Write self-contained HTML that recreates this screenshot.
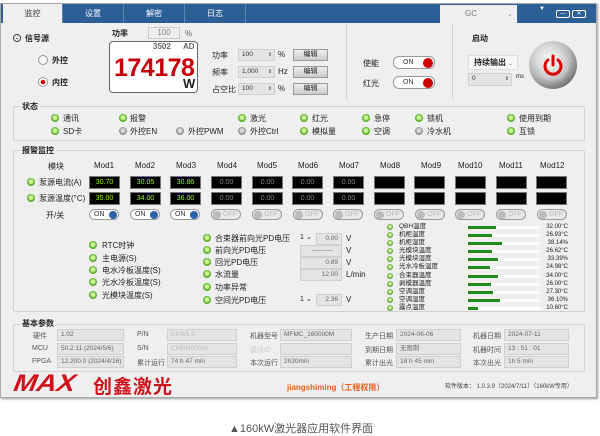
<!DOCTYPE html>
<html><head><meta charset="utf-8"><style>
*{margin:0;padding:0;box-sizing:border-box}
body{width:600px;height:436px;background:#fff;position:relative;overflow:hidden;font-family:"Liberation Sans","Noto Sans CJK SC",sans-serif;font-size:8px;color:#222}
.a{position:absolute;white-space:nowrap}
.win{position:absolute;left:0;top:3px;width:597px;height:395px;background:#efefef;border:1px solid #aaa;box-shadow:1px 1px 2px #999}
.tab{position:absolute;top:4px;height:19px;background:#2c5f95;color:#fff;font-size:8px;text-align:center;line-height:19px;border-right:1px solid #5a86b5}
.grp{position:absolute;border:1px solid #d2d2d2;border-radius:2px}
.gt{position:absolute;font-weight:bold;font-size:8px;background:#efefef;padding:0 2px}
.led{position:absolute;width:8px;height:8px;border-radius:50%;background:radial-gradient(circle at 50% 45%,#d6f7a0 0 25%,#5cb82c 55%,#3d8a1a 100%)}
.led.g{background:radial-gradient(circle at 50% 45%,#ddd 0 25%,#999 55%,#777 100%)}
.box{position:absolute;background:#000;border:1px solid #777;color:#9f0;font-size:7px;text-align:center;width:31px;height:13px;line-height:11px}
.box.d{color:#888}
.tg{position:absolute;width:30px;height:11px;border:1px solid #999;border-radius:6px;background:#fff;font-size:7px;line-height:9px;padding-left:4px;color:#333}
.tg i{position:absolute;right:1px;top:1px;width:8px;height:8px;border-radius:50%;background:#2a64a8}
.tg.off{background:#e8e8e8;color:#bbb;padding-left:11px}
.tg.off i{left:1px;right:auto;background:#bbb}
.inp{position:absolute;background:#e4e4e4;border:1px solid #cfcfcf;height:12px;font-size:6.5px;line-height:10px;padding-left:3px;color:#666;white-space:nowrap;overflow:hidden}
.btn{position:absolute;width:35px;height:12px;background:linear-gradient(#eee,#ccc);border:1px solid #999;font-size:7px;text-align:center;line-height:10px}
.bar{position:absolute;left:468px;width:72px;height:3px;background:#fff}
.bar i{display:block;height:3px;background:#1e8a1e}
.bl{position:absolute;color:#555;font-size:7px;white-space:nowrap}
.sl{position:absolute;left:387px;width:6px;height:6px;border-radius:50%;background:radial-gradient(circle at 50% 45%,#d6f7a0 0 25%,#5cb82c 55%,#3d8a1a 100%)}
</style></head><body>
<div class="win"></div>
<div class="a" style="left:1px;top:4px;width:595px;height:19px;background:#2c5f95"></div>
<div class="tab" style="left:3px;width:60px;background:#f0f0f0;color:#333">监控</div>
<div class="tab" style="left:63px;width:61px">设置</div>
<div class="tab" style="left:124px;width:61px">解密</div>
<div class="tab" style="left:185px;width:61px">日志</div>
<div class="a" style="left:440px;top:5px;width:77px;height:18px;background:#efefef;color:#777;line-height:18px;padding-left:25px">GC <span style="margin-left:28px;font-size:6px">⌄</span></div>
<div class="a" style="left:539px;top:6px;color:#fff;font-size:6px">▼</div>
<div class="a" style="left:556px;top:10px;width:14px;height:8px;border:1px solid #fff;border-radius:2px;color:#fff;font-size:6px;line-height:6px;text-align:center">—</div>
<div class="a" style="left:572px;top:10px;width:14px;height:8px;border:1px solid #fff;border-radius:2px;color:#fff;font-size:6px;line-height:6px;text-align:center">✕</div>

<div class="a" style="left:13px;top:34px;width:8px;height:8px;border:1px solid #444;border-radius:50%;font-size:5px;line-height:6px;text-align:center">⌄</div>
<div class="a" style="left:25px;top:33px;font-weight:bold">信号源</div>
<div class="a" style="left:38px;top:55px;width:10px;height:10px;border-radius:50%;border:1px solid #999;background:#f6f6f6"></div>
<div class="a" style="left:52px;top:55px;font-weight:bold">外控</div>
<div class="a" style="left:38px;top:77px;width:10px;height:10px;border-radius:50%;border:1px solid #999;background:radial-gradient(#c00 0 35%,#fff 45%)"></div>
<div class="a" style="left:52px;top:77px;font-weight:bold">内控</div>
<div class="a" style="left:112px;top:28px;font-weight:bold">功率</div>
<div class="a" style="left:148px;top:27px;width:32px;height:12px;border:1px solid #ccc;background:#eee;color:#888;text-align:center;line-height:10px">100</div>
<div class="a" style="left:185px;top:29px;color:#666">%</div>
<div class="a" style="left:109px;top:41px;width:89px;height:52px;background:#fff;border:1px solid #666;border-radius:4px"></div>
<div class="a" style="left:153px;top:42px;font-weight:bold;color:#666">3502</div>
<div class="a" style="left:183px;top:42px;font-weight:bold;color:#666">AD</div>
<div class="a" style="left:114px;top:54px;font-size:25px;font-weight:bold;color:#c8000a;letter-spacing:-0.5px">174178</div>
<div class="a" style="left:183px;top:76px;font-size:13px;font-weight:bold">W</div>

<div class="a" style="left:212px;top:50px">功率</div>
<div class="inp" style="left:238px;top:49px;width:37px;color:#333">100<span style="position:absolute;right:2px;font-size:5px">⇕</span></div>
<div class="a" style="left:278px;top:50px">%</div>
<div class="btn" style="left:293px;top:49px">编辑</div>
<div class="a" style="left:212px;top:67px">频率</div>
<div class="inp" style="left:238px;top:66px;width:37px;color:#333">1,000<span style="position:absolute;right:2px;font-size:5px">⇕</span></div>
<div class="a" style="left:278px;top:67px">Hz</div>
<div class="btn" style="left:293px;top:66px">编辑</div>
<div class="a" style="left:212px;top:84px">占空比</div>
<div class="inp" style="left:238px;top:83px;width:37px;color:#333">100<span style="position:absolute;right:2px;font-size:5px">⇕</span></div>
<div class="a" style="left:278px;top:84px">%</div>
<div class="btn" style="left:293px;top:83px">编辑</div>
<div class="a" style="left:346px;top:24px;width:1px;height:76px;background:#d4d4d4"></div>
<div class="a" style="left:452px;top:24px;width:1px;height:76px;background:#d4d4d4"></div>
<div class="a" style="left:363px;top:58px">使能</div>
<div class="tg" style="left:393px;top:56px;width:42px;height:13px;padding-left:9px;line-height:11px">ON<i style="background:#c00;width:10px;height:10px"></i></div>
<div class="a" style="left:363px;top:78px">红光</div>
<div class="tg" style="left:393px;top:76px;width:42px;height:13px;padding-left:9px;line-height:11px">ON<i style="background:#c00;width:10px;height:10px"></i></div>
<div class="a" style="left:472px;top:33px;font-weight:bold">启动</div>
<div class="a" style="left:468px;top:55px;width:50px;height:15px;background:#f8f8f8;border:1px solid #ddd;padding-left:5px;line-height:13px;font-weight:bold">持续输出 <span style="font-size:5px;color:#888">⌄</span></div>
<div class="inp" style="left:468px;top:73px;width:44px;height:13px;color:#333">0<span style="position:absolute;right:2px;font-size:5px">⇕</span></div>
<div class="a" style="left:516px;top:74px;font-size:6px">ms</div>
<div class="a" style="left:529px;top:41px;width:48px;height:48px;border-radius:50%;background:radial-gradient(circle at 40% 35%,#fff,#bbb 50%,#666 80%,#333)"></div>
<div class="a" style="left:537px;top:49px;width:32px;height:32px;border-radius:50%;background:radial-gradient(circle at 40% 35%,#fff,#ccc 60%,#999)"></div>
<svg class="a" style="left:541px;top:53px" width="24" height="24" viewBox="0 0 24 24"><path d="M7 7 A8 8 0 1 0 17 7" fill="none" stroke="#d00" stroke-width="3" stroke-linecap="round"/><path d="M12 3V12" stroke="#d00" stroke-width="3" stroke-linecap="round"/></svg>

<div class="grp" style="left:13px;top:106px;width:572px;height:35px"></div>
<div class="gt" style="left:20px;top:101px">状态</div>
<div class="led" style="left:51px;top:114px"></div><div class="a" style="left:63px;top:113px">通讯</div>
<div class="led" style="left:51px;top:127px"></div><div class="a" style="left:63px;top:126px">SD卡</div>
<div class="led" style="left:119px;top:114px"></div><div class="a" style="left:130px;top:113px">报警</div>
<div class="led g" style="left:119px;top:127px"></div><div class="a" style="left:130px;top:126px">外控EN</div>
<div class="led g" style="left:176px;top:127px"></div><div class="a" style="left:188px;top:126px">外控PWM</div>
<div class="led" style="left:238px;top:114px"></div><div class="a" style="left:250px;top:113px">激光</div>
<div class="led g" style="left:238px;top:127px"></div><div class="a" style="left:250px;top:126px">外控Ctrl</div>
<div class="led" style="left:300px;top:114px"></div><div class="a" style="left:312px;top:113px">红光</div>
<div class="led" style="left:300px;top:127px"></div><div class="a" style="left:312px;top:126px">模拟量</div>
<div class="led" style="left:362px;top:114px"></div><div class="a" style="left:374px;top:113px">急停</div>
<div class="led" style="left:362px;top:127px"></div><div class="a" style="left:374px;top:126px">空调</div>
<div class="led" style="left:415px;top:114px"></div><div class="a" style="left:427px;top:113px">锁机</div>
<div class="led g" style="left:415px;top:127px"></div><div class="a" style="left:427px;top:126px">冷水机</div>
<div class="led" style="left:507px;top:114px"></div><div class="a" style="left:519px;top:113px">使用到期</div>
<div class="led" style="left:507px;top:127px"></div><div class="a" style="left:519px;top:126px">互锁</div>

<div class="grp" style="left:13px;top:150px;width:572px;height:162px"></div>
<div class="gt" style="left:20px;top:145px">报警监控</div>
<div class="a" style="left:48px;top:161px">模块</div>
<div class="led" style="left:27px;top:178px"></div><div class="a" style="left:39px;top:177px">泵源电流(A)</div>
<div class="led" style="left:27px;top:194px"></div><div class="a" style="left:39px;top:193px">泵源温度(°C)</div>
<div class="a" style="left:46px;top:210px">开/关</div>

<div class="a" style="left:94px;top:161px">Mod1</div><div class="box" style="left:89px;top:176px">30.70</div><div class="box" style="left:89px;top:192px">35.00</div><div class="tg" style="left:89px;top:209px">ON<i></i></div>
<div class="a" style="left:135px;top:161px">Mod2</div><div class="box" style="left:130px;top:176px">30.05</div><div class="box" style="left:130px;top:192px">34.00</div><div class="tg" style="left:130px;top:209px">ON<i></i></div>
<div class="a" style="left:176px;top:161px">Mod3</div><div class="box" style="left:170px;top:176px">30.86</div><div class="box" style="left:170px;top:192px">36.00</div><div class="tg" style="left:170px;top:209px">ON<i></i></div>
<div class="a" style="left:217px;top:161px">Mod4</div><div class="box d" style="left:211px;top:176px">0.00</div><div class="box d" style="left:211px;top:192px">0.00</div><div class="tg off" style="left:211px;top:209px">OFF<i></i></div>
<div class="a" style="left:257px;top:161px">Mod5</div><div class="box d" style="left:252px;top:176px">0.00</div><div class="box d" style="left:252px;top:192px">0.00</div><div class="tg off" style="left:252px;top:209px">OFF<i></i></div>
<div class="a" style="left:298px;top:161px">Mod6</div><div class="box d" style="left:292px;top:176px">0.00</div><div class="box d" style="left:292px;top:192px">0.00</div><div class="tg off" style="left:293px;top:209px">OFF<i></i></div>
<div class="a" style="left:339px;top:161px">Mod7</div><div class="box d" style="left:333px;top:176px">0.00</div><div class="box d" style="left:333px;top:192px">0.00</div><div class="tg off" style="left:333px;top:209px">OFF<i></i></div>
<div class="a" style="left:380px;top:161px">Mod8</div><div class="box" style="left:374px;top:176px"></div><div class="box" style="left:374px;top:192px"></div><div class="tg off" style="left:374px;top:209px">OFF<i></i></div>
<div class="a" style="left:421px;top:161px">Mod9</div><div class="box" style="left:414px;top:176px"></div><div class="box" style="left:414px;top:192px"></div><div class="tg off" style="left:415px;top:209px">OFF<i></i></div>
<div class="a" style="left:458px;top:161px">Mod10</div><div class="box" style="left:455px;top:176px"></div><div class="box" style="left:455px;top:192px"></div><div class="tg off" style="left:455px;top:209px">OFF<i></i></div>
<div class="a" style="left:499px;top:161px">Mod11</div><div class="box" style="left:496px;top:176px"></div><div class="box" style="left:496px;top:192px"></div><div class="tg off" style="left:496px;top:209px">OFF<i></i></div>
<div class="a" style="left:540px;top:161px">Mod12</div><div class="box" style="left:536px;top:176px"></div><div class="box" style="left:536px;top:192px"></div><div class="tg off" style="left:537px;top:209px">OFF<i></i></div>

<div class="led" style="left:89px;top:241px"></div><div class="a" style="left:102px;top:240px">RTC时钟</div>
<div class="led" style="left:89px;top:254px"></div><div class="a" style="left:102px;top:253px">主电源(S)</div>
<div class="led" style="left:89px;top:266px"></div><div class="a" style="left:102px;top:265px">电水冷板温度(S)</div>
<div class="led" style="left:89px;top:278px"></div><div class="a" style="left:102px;top:277px">光水冷板温度(S)</div>
<div class="led" style="left:89px;top:291px"></div><div class="a" style="left:102px;top:290px">光模块温度(S)</div>

<div class="led" style="left:203px;top:234px"></div><div class="a" style="left:215px;top:233px">合束器前向光PD电压</div>
<div class="led" style="left:203px;top:246px"></div><div class="a" style="left:215px;top:245px">前向光PD电压</div>
<div class="led" style="left:203px;top:258px"></div><div class="a" style="left:215px;top:257px">回光PD电压</div>
<div class="led" style="left:203px;top:270px"></div><div class="a" style="left:215px;top:269px">水流量</div>
<div class="led" style="left:203px;top:283px"></div><div class="a" style="left:215px;top:282px">功率异常</div>
<div class="led" style="left:203px;top:296px"></div><div class="a" style="left:215px;top:295px">空间光PD电压</div>
<div class="a" style="left:300px;top:233px;font-size:7px">1 ⌄</div><div class="inp" style="left:316px;top:233px;width:26px;text-align:right;padding-right:3px">0.00</div><div class="a" style="left:346px;top:234px">V</div>
<div class="inp" style="left:300px;top:245px;width:42px;text-align:center">----------</div><div class="a" style="left:346px;top:246px">V</div>
<div class="inp" style="left:300px;top:257px;width:42px;text-align:right;padding-right:3px">0.89</div><div class="a" style="left:346px;top:258px">V</div>
<div class="inp" style="left:300px;top:269px;width:42px;text-align:right;padding-right:3px">12.00</div><div class="a" style="left:346px;top:270px">L/min</div>
<div class="a" style="left:300px;top:295px;font-size:7px">1 ⌄</div><div class="inp" style="left:316px;top:294px;width:26px;text-align:right;padding-right:3px">2.36</div><div class="a" style="left:346px;top:295px">V</div>

<div style="position:absolute;left:399px;top:223px;font-size:6.5px;line-height:8.1px;white-space:nowrap">QBH温度<br>机柜温度<br>机柜湿度<br>光模块温度<br>光模块湿度<br>光水冷板温度<br>合束器温度<br>剥模器温度<br>空调温度<br>空调湿度<br>露点温度</div>
<div class="sl" style="top:224px"></div><div class="sl" style="top:232px"></div><div class="sl" style="top:240px"></div><div class="sl" style="top:248px"></div><div class="sl" style="top:256px"></div><div class="sl" style="top:264px"></div><div class="sl" style="top:273px"></div><div class="sl" style="top:281px"></div><div class="sl" style="top:289px"></div><div class="sl" style="top:297px"></div><div class="sl" style="top:305px"></div>
<div class="bar" style="top:226px"><i style="width:28px"></i></div>
<div class="bar" style="top:234px"><i style="width:24px"></i></div>
<div class="bar" style="top:242px"><i style="width:34px"></i></div>
<div class="bar" style="top:250px"><i style="width:24px"></i></div>
<div class="bar" style="top:258px"><i style="width:30px"></i></div>
<div class="bar" style="top:266px"><i style="width:22px"></i></div>
<div class="bar" style="top:275px"><i style="width:30px"></i></div>
<div class="bar" style="top:283px"><i style="width:23px"></i></div>
<div class="bar" style="top:291px"><i style="width:25px"></i></div>
<div class="bar" style="top:299px"><i style="width:32px"></i></div>
<div class="bar" style="top:307px"><i style="width:10px"></i></div>
<div style="position:absolute;left:538px;top:223px;width:30px;text-align:right;font-size:6px;line-height:8.1px">32.00°C<br>26.93°C<br>38.14%<br>26.62°C<br>33.39%<br>24.98°C<br>34.00°C<br>26.00°C<br>27.30°C<br>36.10%<br>10.60°C</div>

<div class="grp" style="left:13px;top:324px;width:572px;height:48px"></div>
<div class="gt" style="left:20px;top:318px">基本参数</div>
<div class="bl" style="left:33px;top:331px">硬件</div><div class="inp" style="left:57px;top:329px;width:67px">1.02</div>
<div class="bl" style="left:32px;top:345px">MCU</div><div class="inp" style="left:57px;top:343px;width:67px">50.2.11 (2024/5/6)</div>
<div class="bl" style="left:32px;top:358px">FPGA</div><div class="inp" style="left:57px;top:356px;width:67px">12.200.0 (2024/4/16)</div>
<div class="bl" style="left:137px;top:331px">P/N</div><div class="inp" style="left:167px;top:329px;width:70px;color:#bbb">EKW5.0</div>
<div class="bl" style="left:137px;top:345px">S/N</div><div class="inp" style="left:167px;top:343px;width:70px;color:#bbb">CMRN00061</div>
<div class="bl" style="left:137px;top:358px">累计运行</div><div class="inp" style="left:167px;top:356px;width:70px">74 h 47 min</div>
<div class="bl" style="left:250px;top:331px">机器型号</div><div class="inp" style="left:280px;top:329px;width:72px">MFMC_160000M</div>
<div class="bl" style="left:250px;top:345px;color:#ccc">模块ID</div><div class="inp" style="left:280px;top:343px;width:72px"></div>
<div class="bl" style="left:250px;top:358px">本次运行</div><div class="inp" style="left:280px;top:356px;width:72px">2h30min</div>
<div class="bl" style="left:365px;top:331px">生产日期</div><div class="inp" style="left:396px;top:329px;width:65px">2024-06-06</div>
<div class="bl" style="left:365px;top:345px">到期日期</div><div class="inp" style="left:396px;top:343px;width:65px">无限制</div>
<div class="bl" style="left:365px;top:358px">累计出光</div><div class="inp" style="left:396px;top:356px;width:65px">18 h 45 min</div>
<div class="bl" style="left:473px;top:331px">机器日期</div><div class="inp" style="left:504px;top:329px;width:65px">2024-07-11</div>
<div class="bl" style="left:473px;top:345px">机器时间</div><div class="inp" style="left:504px;top:343px;width:65px">13 : 51 : 01</div>
<div class="bl" style="left:473px;top:358px">本次出光</div><div class="inp" style="left:504px;top:356px;width:65px">1h 5 min</div>

<div class="a" style="left:14px;top:370px;font-size:24px;font-weight:900;font-style:italic;color:#d0101a;letter-spacing:0px;transform:skewX(-10deg) scaleX(1.15);transform-origin:left">MAX</div>
<div class="a" style="left:93px;top:372px;font-size:19px;font-weight:bold;color:#d0101a;letter-spacing:1px">创鑫激光</div>
<div class="a" style="left:287px;top:382px;font-size:8px;font-weight:bold;color:#e8601a">jiangshiming（工程权限）</div>
<div class="a" style="left:445px;top:381px;font-size:6px;color:#444">软件版本：  1.0.3.9（2024/7/11）（160kW专用）</div>

<div class="a" style="left:229px;top:420px;font-size:11px;color:#555">▲160kW激光器应用软件界面</div>
</body></html>
